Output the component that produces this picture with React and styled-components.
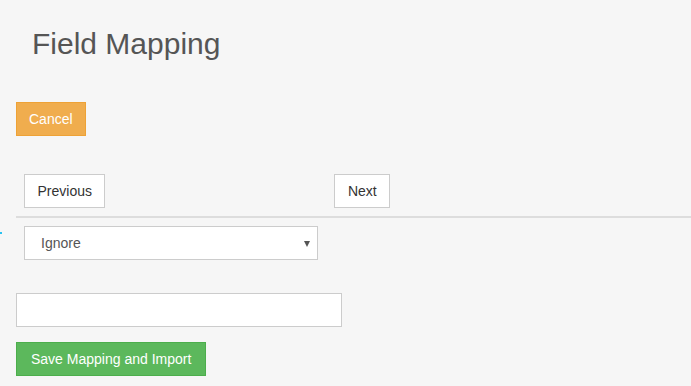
import React from 'react'
import styled, { createGlobalStyle } from 'styled-components'

const GlobalStyle = createGlobalStyle`
  html, body {
    margin: 0;
    padding: 0;
    background: #f6f6f6;
    font-family: "Liberation Sans", Arial, Helvetica, sans-serif;
    font-size: 14px;
    color: #333;
  }
`

const Page = styled.div`
  position: relative;
  padding: 27px 0 0 16px;
  height: 386px;
  box-sizing: border-box;
  overflow: hidden;
`

const Title = styled.h1`
  margin: 0 0 42px 16px;
  font-size: 30px;
  line-height: 33px;
  font-weight: 400;
  color: #555;
`

const Button = styled.button`
  display: inline-block;
  box-sizing: border-box;
  height: 34px;
  padding: 0 ${(p) => p.$pad || 12}px;
  font-family: inherit;
  font-size: 14px;
  line-height: 32px;
  border: 1px solid ${(p) => (p.$variant === 'warning' ? '#eea236' : p.$variant === 'success' ? '#4cae4c' : '#ccc')};
  background: ${(p) => (p.$variant === 'warning' ? '#f0ad4e' : p.$variant === 'success' ? '#5cb85c' : '#fff')};
  color: ${(p) => (p.$variant ? '#fff' : '#333')};
  border-radius: 0;
  cursor: pointer;
`

const CancelRow = styled.div`
  margin-bottom: 38px;
`

const Pager = styled.div`
  display: flex;
  padding: 0 0 8px 8px;
  border-bottom: 2px solid #ddd;
`

const PagerSpacer = styled.div`
  width: 229px;
`

const SelectWrap = styled.div`
  position: relative;
  width: 294px;
  margin: 8px 0 33px 8px;
`

const Select = styled.div`
  box-sizing: border-box;
  height: 34px;
  padding: 0 16px;
  line-height: 32px;
  background: #fff;
  border: 1px solid #ccc;
  color: #555;
`

const Caret = styled.span`
  position: absolute;
  right: 8px;
  top: 15px;
  width: 0;
  height: 0;
  border-left: 3.5px solid transparent;
  border-right: 3.5px solid transparent;
  border-top: 6px solid #555;
`

const TextInput = styled.input`
  display: block;
  box-sizing: border-box;
  width: 326px;
  height: 34px;
  margin: 0 0 15px;
  padding: 0 12px;
  border: 1px solid #ccc;
  background: #fff;
  font-family: inherit;
  font-size: 14px;
  outline: none;
`

const Marker = styled.span`
  position: absolute;
  left: 0;
  top: 232px;
  width: 2px;
  height: 2px;
  background: #29c1f0;
`

export default function App() {
  return (
    <>
      <GlobalStyle />
      <Page>
        <Title>Field Mapping</Title>
        <CancelRow>
          <Button $variant="warning">Cancel</Button>
        </CancelRow>
        <Pager>
          <Button $pad={12.5}>Previous</Button>
          <PagerSpacer />
          <Button $pad={12.5}>Next</Button>
        </Pager>
        <SelectWrap>
          <Select>Ignore</Select>
          <Caret />
        </SelectWrap>
        <TextInput type="text" />
        <Button $variant="success" $pad={14}>Save Mapping and Import</Button>
        <Marker />
      </Page>
    </>
  )
}
